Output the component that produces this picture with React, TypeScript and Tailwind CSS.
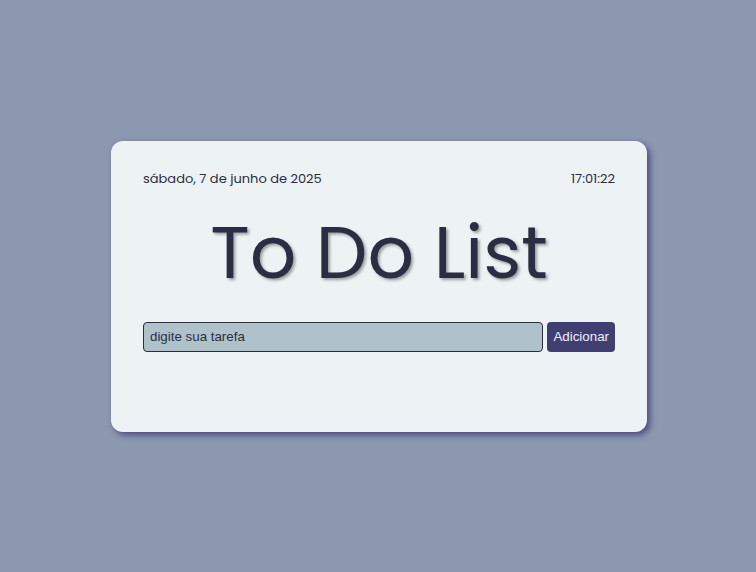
import { useState } from "react";

export default function App() {
  const [task, setTask] = useState("");

  return (
    <div className="min-h-screen w-full bg-[#8c98b0] flex items-center justify-center pl-[2px] font-['Poppins','Inter',sans-serif]">
      <div className="w-[536px] h-[291px] bg-[#edf2f5] rounded-xl shadow-[3px_3px_6px_rgba(60,55,110,0.8)] px-8 pt-[28px] text-[#2b2d42]">
        <div className="flex justify-between text-[13px] leading-5">
          <span>sábado, 7 de junho de 2025</span>
          <span>17:01:22</span>
        </div>
        <h1 className="mt-[20px] text-center text-[73px] leading-[88px] font-normal [text-shadow:2px_2px_3px_rgba(0,0,0,0.35)]">
          To Do List
        </h1>
        <div className="mt-[25px] flex gap-1 font-['Liberation_Sans','Arimo',Arial,sans-serif]">
          <input
            value={task}
            onChange={(e) => setTask(e.target.value)}
            placeholder="digite sua tarefa"
            className="flex-1 h-[30px] bg-[#b0c2c9] border border-[#2b2d42] rounded px-[6px] text-[13.33px] text-[#2b2d42] placeholder:text-[#2b2d42] outline-none"
          />
          <button className="h-[30px] px-[6px] bg-[#413e72] text-[#f0f0f8] rounded text-[13.33px]">
            Adicionar
          </button>
        </div>
      </div>
    </div>
  );
}
